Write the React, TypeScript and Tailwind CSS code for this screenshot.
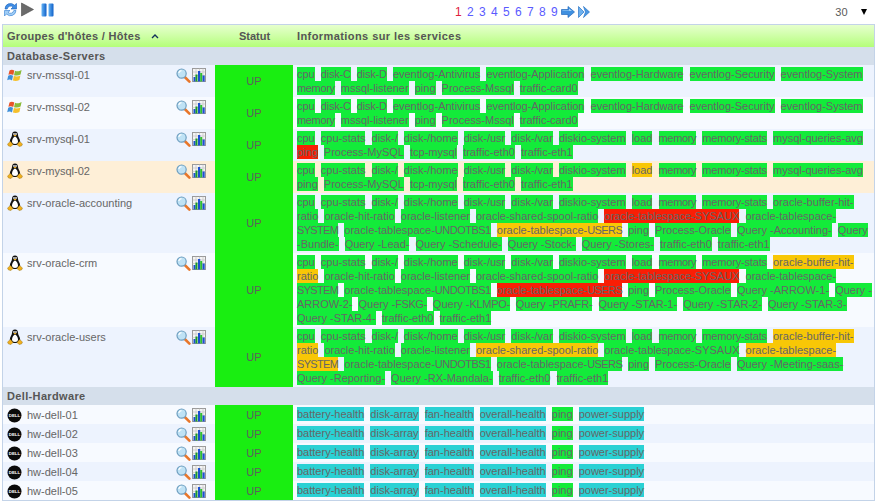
import React from "react";

type Tone = "ok" | "warn" | "crit" | "pend";
type Svc = [string, Tone?];

const toneClass: Record<Tone, string> = {
  ok: "bg-[#13eb3a]",
  warn: "bg-[#f8c706]",
  crit: "bg-[#f91e05]",
  pend: "bg-[#2ad1d4]",
};

const base = (over: Record<string, Tone>, names: string[]): Svc[] => names.map((n) => [n, over[n] ?? "ok"]);

const mssql = ["cpu","disk-C","disk-D","eventlog-Antivirus","eventlog-Application","eventlog-Hardware","eventlog-Security","eventlog-System","memory","mssql-listener","ping","Process-Mssql","traffic-card0"];
const mysql = ["cpu","cpu-stats","disk-/","disk-/home","disk-/usr","disk-/var","diskio-system","load","memory","memory-stats","mysql-queries-avg","ping","Process-MySQL","tcp-mysql","traffic-eth0","traffic-eth1"];
const oracleCommon = ["cpu","cpu-stats","disk-/","disk-/home","disk-/usr","disk-/var","diskio-system","load","memory","memory-stats","oracle-buffer-hit-ratio","oracle-hit-ratio","oracle-listener","oracle-shared-spool-ratio","oracle-tablespace-SYSAUX","oracle-tablespace-SYSTEM","oracle-tablespace-UNDOTBS1","oracle-tablespace-USERS","ping","Process-Oracle"];
const tail = ["traffic-eth0","traffic-eth1"];
const dell = base({ "battery-health": "pend", "disk-array": "pend", "fan-health": "pend", "overall-health": "pend", "power-supply": "pend" }, ["battery-health","disk-array","fan-health","overall-health","ping","power-supply"]);

type Host = { name: string; os: "win" | "tux" | "dell"; svcs: Svc[]; hl?: boolean };
const groups: { name: string; hosts: Host[] }[] = [
  {
    name: "Database-Servers",
    hosts: [
      { name: "srv-mssql-01", os: "win", svcs: base({}, mssql) },
      { name: "srv-mssql-02", os: "win", svcs: base({}, mssql) },
      { name: "srv-mysql-01", os: "tux", svcs: base({ ping: "crit" }, mysql) },
      { name: "srv-mysql-02", os: "tux", hl: true, svcs: base({ load: "warn" }, mysql) },
      {
        name: "srv-oracle-accounting",
        os: "tux",
        svcs: base(
          { "oracle-tablespace-SYSAUX": "crit", "oracle-tablespace-USERS": "warn" },
          [...oracleCommon, "Query -Accounting-", "Query -Bundle-", "Query -Lead-", "Query -Schedule-", "Query -Stock-", "Query -Stores-", ...tail]
        ),
      },
      {
        name: "srv-oracle-crm",
        os: "tux",
        svcs: base(
          { "oracle-buffer-hit-ratio": "warn", "oracle-tablespace-SYSAUX": "crit", "oracle-tablespace-USERS": "crit" },
          [...oracleCommon, "Query -ARROW-1-", "Query -ARROW-2-", "Query -FSKG-", "Query -KLMPO-", "Query -PRAFR-", "Query -STAR-1-", "Query -STAR-2-", "Query -STAR-3-", "Query -STAR-4-", ...tail]
        ),
      },
      {
        name: "srv-oracle-users",
        os: "tux",
        svcs: base(
          { "oracle-buffer-hit-ratio": "warn", "oracle-shared-spool-ratio": "warn", "oracle-tablespace-SYSTEM": "warn" },
          [...oracleCommon, "Query -Meeting-saas-", "Query -Reporting-", "Query -RX-Mandala-", ...tail]
        ),
      },
    ],
  },
  {
    name: "Dell-Hardware",
    hosts: ["01", "02", "03", "04", "05"].map((n) => ({ name: `hw-dell-${n}`, os: "dell" as const, svcs: dell })),
  },
];

// Width the reference's hinted Arial saves on these labels against Liberation Sans, in px.
const narrower: Record<string, number> = {
  "disk-C": 1.2,
  "disk-D": 1.2,
  "eventlog-Application": 1,
  memory: 2,
  "memory-stats": 2,
  SYSTEM: 4,
  UNDOTBS1: 4,
  USERS: 3,
  "FSKG-": 2,
  "KLMPO-": 2,
  "PRAFR-": 1,
};
const spacingFor = (name: string) => `${-(narrower[name] ?? 0) / name.length}px`;

const Label = ({ name }: { name: string }) => {
  if (name.startsWith("Query -")) {
    const suffix = name.slice(7);
    return (
      <>
        Query -<wbr />
        <span style={{ letterSpacing: spacingFor(suffix) }}>{suffix}</span>
      </>
    );
  }
  if (name.startsWith("oracle-tablespace-")) {
    const suffix = name.slice(18);
    return (
      <>
        oracle-tablespace-
        <span style={{ letterSpacing: spacingFor(suffix) }}>{suffix}</span>
      </>
    );
  }
  return <span style={{ letterSpacing: spacingFor(name) }}>{name}</span>;
};

const Refresh = () => (
  <svg width="15" height="15" viewBox="0 0 15 15">
    <path d="M2 7 A5.5 5.5 0 0 1 11.5 3.2 L13.5 1.5 V7 H8 L10 5 A3.5 3.5 0 0 0 4.2 7 Z" fill="#3f8ee6" stroke="#1c62b8" strokeWidth="0.6" />
    <path d="M13 8.5 A5.5 5.5 0 0 1 3.5 12 L1.5 14 V8.5 H7 L5 10.4 A3.5 3.5 0 0 0 10.8 8.5 Z" fill="#9fcdf6" stroke="#2f7cd2" strokeWidth="0.6" />
  </svg>
);
const Play = () => (
  <svg width="13" height="15" viewBox="0 0 13 15">
    <path d="M0.5 1 L12.5 7.5 L0.5 14 Z" fill="#6b6b6b" stroke="#4a4a4a" strokeWidth="0.6" />
  </svg>
);
const Pause = () => (
  <svg width="13" height="14" viewBox="0 0 13 14">
    <defs>
      <linearGradient id="pz" x1="0" x2="1" y1="0" y2="0">
        <stop offset="0" stopColor="#66b4f5" />
        <stop offset="1" stopColor="#0f5fc8" />
      </linearGradient>
    </defs>
    <rect x="0.5" y="0.5" width="5" height="13" rx="1" fill="url(#pz)" />
    <rect x="7.5" y="0.5" width="5" height="13" rx="1" fill="url(#pz)" />
  </svg>
);
const NextArrow = () => (
  <svg width="14" height="12" viewBox="0 0 14 12">
    <path d="M0.5 3.5 H7 V0.5 L13.5 6 L7 11.5 V8.5 H0.5 Z" fill="#3f90e0" stroke="#2069bd" strokeWidth="0.7" />
    <path d="M1.5 4.5 H8 V2.5 L11 5 H1.5 Z" fill="#a8d3f8" />
  </svg>
);
const LastArrow = () => (
  <svg width="12" height="12" viewBox="0 0 12 12">
    <path d="M0.5 0.5 L6 6 L0.5 11.5 V0.5 Z" fill="#6cb0ee" stroke="#2a74c6" strokeWidth="0.7" />
    <path d="M5.5 0.5 L11.5 6 L5.5 11.5 L7.5 6 Z" fill="#4a98e4" stroke="#2a74c6" strokeWidth="0.7" />
  </svg>
);
const Windows = () => (
  <svg width="16" height="15" viewBox="0 0 16 15">
    <path d="M2.5 2.5 C4 1.5 5.5 1.5 7.3 2.4 L6.3 7 C4.5 6 3 6 1.4 6.8 Z" fill="#e8542a" />
    <path d="M8 2.7 C10 3.6 12 3.5 14.6 2 L13.6 6.5 C11.5 7.8 9 7.8 7 7.2 Z" fill="#8bbb3a" />
    <path d="M1.2 7.7 C3 6.8 4.5 7 6 7.8 L5 12.4 C3.4 11.4 2 11.4 0.2 12.2 Z" fill="#3e8fd8" />
    <path d="M6.9 8 C9 8.8 11.3 8.6 13.4 7.4 L12.4 11.9 C10 13.2 8 13.1 5.9 12.6 Z" fill="#f5c02c" />
  </svg>
);
const Tux = () => (
  <svg width="16" height="16" viewBox="0 0 16 16">
    <path d="M8 0.5 C5.8 0.5 5 2.2 5 4 C5 6 3 7.5 2.8 10.5 C2.7 12.5 5 14 8 14 C11 14 13.3 12.5 13.2 10.5 C13 7.5 11 6 11 4 C11 2.2 10.2 0.5 8 0.5 Z" fill="#111" />
    <path d="M8 5.5 C6.3 6.2 5 8.5 5 10.5 C5 12.2 6.4 13 8 13 C9.6 13 11 12.2 11 10.5 C11 8.5 9.7 6.2 8 5.5 Z" fill="#fff" />
    <ellipse cx="7" cy="3" rx="0.8" ry="1" fill="#fff" />
    <ellipse cx="9" cy="3" rx="0.8" ry="1" fill="#fff" />
    <path d="M6.4 4.3 L8 3.7 L9.6 4.3 L8 5.4 Z" fill="#f2b01e" />
    <path d="M0.5 13 L3.5 10.5 L6 13.5 L4 15.5 L1.5 15 Z" fill="#f2b01e" stroke="#8a6a10" strokeWidth="0.4" />
    <path d="M15.5 13 L12.5 10.5 L10 13.5 L12 15.5 L14.5 15 Z" fill="#f2b01e" stroke="#8a6a10" strokeWidth="0.4" />
  </svg>
);
const Dell = () => (
  <svg width="15" height="15" viewBox="0 0 15 15">
    <circle cx="7.5" cy="7.5" r="7" fill="#0a0a0a" />
    <text x="7.5" y="9" textAnchor="middle" fontSize="4.4" fontWeight="700" fill="#fff" fontFamily="Liberation Sans, sans-serif">DELL</text>
  </svg>
);
const Magnifier = () => (
  <svg width="15" height="15" viewBox="0 0 15 15">
    <path d="M8.5 8.8 L13.4 13.6" stroke="#e8762a" strokeWidth="2.6" strokeLinecap="round" />
    <circle cx="5.6" cy="5.6" r="4.6" fill="#bfe2f5" stroke="#6f9fc0" strokeWidth="1.2" />
    <path d="M2.8 5 A3 3 0 0 1 5.5 2.6" stroke="#fff" strokeWidth="1.2" fill="none" />
  </svg>
);
const Chart = () => (
  <svg width="14" height="14" viewBox="0 0 14 14">
    <rect x="0.5" y="0.5" width="13" height="13" fill="#f4f4f4" stroke="#9a9a9a" />
    <path d="M0.5 4 H13.5 M0.5 7.5 H13.5 M4 0.5 V13.5 M7.5 0.5 V13.5 M11 0.5 V13.5" stroke="#bdbdbd" strokeWidth="0.6" />
    <rect x="1.5" y="9" width="2" height="4.5" fill="#1c4fd0" />
    <rect x="3.5" y="6.5" width="2" height="7" fill="#1a9a2a" />
    <rect x="6" y="3" width="2.2" height="10.5" fill="#1c4fd0" />
    <rect x="8.2" y="5" width="2" height="8.5" fill="#2fbf30" />
    <rect x="10.5" y="7.5" width="2.2" height="6" fill="#1c4fd0" />
  </svg>
);

const osIcon = { win: <Windows />, tux: <Tux />, dell: <Dell /> };

export default function App() {
  let idx = 0;
  return (
    <div className="w-[880px] h-[501px] bg-white font-['Liberation_Sans',sans-serif] text-[11px] leading-[14px] text-[#666] overflow-hidden">
      <div className="h-[24px] flex items-start">
        <div className="w-[455px] pl-[3px] pt-[2px] flex items-center gap-[3px]">
          <Refresh />
          <Play />
          <span className="w-[1px]" />
          <Pause />
        </div>
        <div className="flex items-center pt-[5px] text-[12px] text-[#5a5aff]">
          <span className="w-[12px] text-[#e0203c]">1</span>
          {["2", "3", "4", "5", "6", "7", "8", "9"].map((n) => (
            <span key={n} className="w-[12px]">{n}</span>
          ))}
          <span className="flex gap-[3px] -ml-[2px]">
            <NextArrow />
            <LastArrow />
          </span>
        </div>
        <div className="ml-auto flex items-center pt-[5px] pr-[13px]">
          <span className="text-[#5a5a5a] tracking-[0.3px]">30</span>
          <span className="ml-[13px] w-0 h-0 border-x-[3px] border-x-transparent border-t-[6px] border-t-black" />
        </div>
      </div>

      <div className="ml-[2px] w-[873px] border border-[#c3d3e8]">
        <table className="w-full table-fixed border-collapse">
          <colgroup>
            <col className="w-[212px]" />
            <col className="w-[78px]" />
            <col />
          </colgroup>
          <thead>
            <tr className="h-[22px] bg-gradient-to-b from-[#e6ffcd] to-[#b4fe78] text-[#555] font-bold">
              <th className="pl-[4px] text-left font-bold tracking-[0.3px]">
                <span className="inline-flex items-center gap-[10px]">
                  Groupes d'hôtes / Hôtes
                  <svg width="8" height="5" viewBox="0 0 8 5">
                    <path d="M1 4 L4 1 L7 4" fill="none" stroke="#12305a" strokeWidth="1.4" />
                  </svg>
                </span>
              </th>
              <th className="pl-[1px] text-center font-bold">Statut</th>
              <th className="pl-[4px] text-left font-bold tracking-[0.42px]">Informations sur les services</th>
            </tr>
          </thead>
          <tbody>
            {groups.map((g) => (
              <React.Fragment key={g.name}>
                <tr className="h-[18px] bg-[#d5dfeb] text-[#555]">
                  <td colSpan={3} className="pl-[4px] font-bold tracking-[0.35px]">{g.name}</td>
                </tr>
                {g.hosts.map((h) => {
                  const alt = idx++ % 2 === 1;
                  const bg = h.hl ? "bg-[#feefd7]" : alt ? "bg-[#f7faff]" : "bg-[#edf3fe]";
                  return (
                    <tr key={h.name} className={bg}>
                      <td className="align-top p-0">
                        <div className="flex items-start pl-[4px] pt-[2px] pr-[9px] h-[19px]">
                          <span className="w-[20px] h-[16px] flex items-center">{osIcon[h.os]}</span>
                          <span className="leading-[15px] pt-[1px]">{h.name}</span>
                          <span className="ml-auto flex items-start gap-[1px] pt-[1px]">
                            <Magnifier />
                            <Chart />
                          </span>
                        </div>
                      </td>
                      <td className="bg-[#19ee11] text-center align-middle p-0 text-[#5e5e5e]">UP</td>
                      <td className="pl-[4px] pr-[1px] py-[2px] align-top">
                        {h.svcs.map(([name, tone]) => (
                          <React.Fragment key={name}>
                            <span className={`${toneClass[tone ?? "ok"]} py-px mr-[3px]`}>
                              <Label name={name} />
                            </span>{" "}
                          </React.Fragment>
                        ))}
                      </td>
                    </tr>
                  );
                })}
              </React.Fragment>
            ))}
          </tbody>
        </table>
      </div>
    </div>
  );
}
